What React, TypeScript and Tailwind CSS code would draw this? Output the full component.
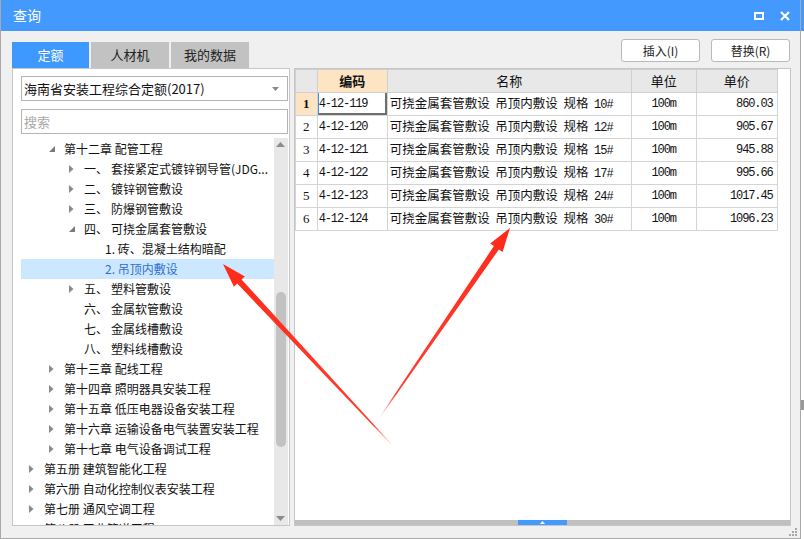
import React from 'react'

type Node = { lvl: 0 | 1 | 2 | 3; arrow?: 'open' | 'closed'; num?: string; text: string; selected?: boolean }

const tree: Node[] = [
  { lvl: 1, arrow: 'open', text: '第十二章 配管工程' },
  { lvl: 2, arrow: 'closed', num: '一、', text: '套接紧定式镀锌钢导管(JDG...' },
  { lvl: 2, arrow: 'closed', num: '二、', text: '镀锌钢管敷设' },
  { lvl: 2, arrow: 'closed', num: '三、', text: '防爆钢管敷设' },
  { lvl: 2, arrow: 'open', num: '四、', text: '可挠金属套管敷设' },
  { lvl: 3, text: '1. 砖、混凝土结构暗配' },
  { lvl: 3, text: '2. 吊顶内敷设', selected: true },
  { lvl: 2, arrow: 'closed', num: '五、', text: '塑料管敷设' },
  { lvl: 2, num: '六、', text: '金属软管敷设' },
  { lvl: 2, num: '七、', text: '金属线槽敷设' },
  { lvl: 2, num: '八、', text: '塑料线槽敷设' },
  { lvl: 1, arrow: 'closed', text: '第十三章 配线工程' },
  { lvl: 1, arrow: 'closed', text: '第十四章 照明器具安装工程' },
  { lvl: 1, arrow: 'closed', text: '第十五章 低压电器设备安装工程' },
  { lvl: 1, arrow: 'closed', text: '第十六章 运输设备电气装置安装工程' },
  { lvl: 1, arrow: 'closed', text: '第十七章 电气设备调试工程' },
  { lvl: 0, arrow: 'closed', text: '第五册 建筑智能化工程' },
  { lvl: 0, arrow: 'closed', text: '第六册 自动化控制仪表安装工程' },
  { lvl: 0, arrow: 'closed', text: '第七册 通风空调工程' },
  { lvl: 0, arrow: 'closed', text: '第八册 工业管道工程' },
]

const rows = [
  ['4-12-119', '10#', '860.03'],
  ['4-12-120', '12#', '905.67'],
  ['4-12-121', '15#', '945.88'],
  ['4-12-122', '17#', '995.66'],
  ['4-12-123', '24#', '1017.45'],
  ['4-12-124', '30#', '1096.23'],
]

const lvlPad = ['pl-[8px]', 'pl-[28px]', 'pl-[48px]', 'pl-[84px]']

const cjk = { fontFamily: '"Noto Sans CJK SC", "Noto Sans", sans-serif' }
const mono = { fontFamily: '"Liberation Mono", "Noto Sans CJK SC", monospace' }

function TreeArrow({ kind }: { kind?: 'open' | 'closed' }) {
  if (kind === 'closed')
    return (
      <svg width="5" height="8" viewBox="0 0 5 8">
        <path d="M0 0 L4.5 4 L0 8 Z" fill="#8a8a8a" />
      </svg>
    )
  if (kind === 'open')
    return (
      <svg width="7" height="7" viewBox="0 0 7 7">
        <path d="M6 0 L6 6 L0 6 Z" fill="#7a7a7a" />
      </svg>
    )
  return null
}

function Arrow({ tip, tail, id }: { tip: [number, number]; tail: [number, number]; id: string }) {
  const dx = tip[0] - tail[0]
  const dy = tip[1] - tail[1]
  const len = Math.hypot(dx, dy)
  const ux = dx / len
  const uy = dy / len
  const nx = -uy
  const ny = ux
  const headLen = 24
  const headW = 15
  const shaftW = 6
  const tailW = 0.8
  const bx = tip[0] - ux * headLen
  const by = tip[1] - uy * headLen
  const p = (x: number, y: number, w: number) => `${x + nx * w / 2},${y + ny * w / 2}`
  const q = (x: number, y: number, w: number) => `${x - nx * w / 2},${y - ny * w / 2}`
  const pts = [
    p(tail[0], tail[1], tailW),
    p(bx, by, shaftW),
    p(bx, by, headW),
    `${tip[0]},${tip[1]}`,
    q(bx, by, headW),
    q(bx, by, shaftW),
    q(tail[0], tail[1], tailW),
  ].join(' ')
  return (
    <>
      <defs>
        <linearGradient id={id} gradientUnits="userSpaceOnUse" x1={tail[0]} y1={tail[1]} x2={tip[0]} y2={tip[1]}>
          <stop offset="0" stopColor="#ff2a1a" stopOpacity="0" />
          <stop offset="0.12" stopColor="#ff2a1a" stopOpacity="0.9" />
          <stop offset="1" stopColor="#ff2a1a" stopOpacity="1" />
        </linearGradient>
      </defs>
      <polygon points={pts} fill={`url(#${id})`} />
    </>
  )
}

export default function App() {
  return (
    <div className="relative w-[804px] h-[539px] flex bg-white overflow-hidden" style={cjk}>
      {/* dialog */}
      <div className="w-[801px] h-[539px] flex flex-col border-x border-b border-[#a9a9a9] bg-[#f0f0f0]">
        {/* title bar */}
        <div className="h-[31px] bg-[#4499ff] flex items-center pl-[12px] pr-[10px] shrink-0">
          <span className="text-white text-[14px]">查询</span>
          <div className="ml-auto flex items-center gap-[16px]">
            <div className="w-[10px] h-[8px] border-2 border-white" />
            <svg width="10" height="10" viewBox="0 0 10 10">
              <path d="M1 1 L9 9 M9 1 L1 9" stroke="white" strokeWidth="2.2" />
            </svg>
          </div>
        </div>

        {/* tabs and buttons */}
        <div className="h-[37px] flex shrink-0 pl-[11px] pr-[10px]">
          <div className="flex items-end gap-[2px]">
            <div className="w-[77px] h-[26px] bg-[#3d98ff] text-white text-[13px] flex items-center justify-center">定额</div>
            <div className="w-[78px] h-[26px] bg-[#c2c2c2] text-[#222] text-[13px] flex items-center justify-center">人材机</div>
            <div className="w-[78px] h-[26px] bg-[#c2c2c2] text-[#222] text-[13px] flex items-center justify-center">我的数据</div>
          </div>
          <div className="ml-auto flex gap-[11px] pt-[8px]">
            <button className="w-[79px] h-[23px] bg-white border border-[#b9b9b9] rounded-[3px] text-[12px] text-[#222]">插入(I)</button>
            <button className="w-[79px] h-[23px] bg-white border border-[#b9b9b9] rounded-[3px] text-[12px] text-[#222]">替换(R)</button>
          </div>
        </div>

        {/* main */}
        <div className="flex gap-[4px] pl-[11px] pr-[9px] h-[458px] shrink-0">
          {/* left panel */}
          <div className="w-[278px] h-[458px] bg-white border border-[#c6c6c6] flex flex-col pl-[8px] pr-[1px]">
            <div className="mt-[7px] h-[25px] border border-[#b4b4b4] flex items-center pl-[2px] pr-[8px] text-[13px] text-[#111]">
              <span>海南省安装工程综合定额(2017)</span>
              <svg className="ml-auto" width="7" height="4" viewBox="0 0 7 4">
                <path d="M0 0 L7 0 L3.5 4 Z" fill="#8a8a8a" />
              </svg>
            </div>
            <div className="mt-[8px] h-[25px] border border-[#b4b4b4] flex items-center pl-[2px] text-[13px] text-[#a8a8a8]">搜索</div>
            <div className="mt-[4px] flex-1 flex overflow-hidden">
              <div className="flex-1 pt-[1px] overflow-hidden">
                {tree.map((n, i) => (
                  <div
                    key={i}
                    className={`h-[20px] flex items-center whitespace-nowrap text-[12px] ${lvlPad[n.lvl]} ${n.selected ? 'bg-[#cce8ff] text-[#2f6fd0]' : 'text-[#111]'}`}
                  >
                    {n.lvl < 3 && (
                      <span className="w-[15px] flex items-center">
                        <TreeArrow kind={n.arrow} />
                      </span>
                    )}
                    {n.num && <span className="w-[27px]">{n.num}</span>}
                    <span>{n.text}</span>
                  </div>
                ))}
              </div>
              {/* vertical scrollbar */}
              <div className="w-[14px] bg-[#e8e8e8] flex flex-col items-center">
                <svg className="mt-[4px]" width="9" height="5" viewBox="0 0 9 5">
                  <path d="M4.5 0 L9 5 L0 5 Z" fill="#8c8c8c" />
                </svg>
                <div className="mt-[145px] w-[10px] h-[155px] rounded-[5px] bg-[#c2c2c2]" />
                <svg className="mt-auto mb-[4px]" width="9" height="5" viewBox="0 0 9 5">
                  <path d="M0 0 L9 0 L4.5 5 Z" fill="#8c8c8c" />
                </svg>
              </div>
            </div>
          </div>

          {/* right panel */}
          <div className="w-[498px] h-[458px] bg-white border border-[#c6c6c6] flex flex-col">
            <div className="flex-1">
              <table className="table-fixed border-collapse text-[12px]" style={{ width: 482 }}>
                <colgroup>
                  <col style={{ width: 22 }} />
                  <col style={{ width: 70 }} />
                  <col style={{ width: 244 }} />
                  <col style={{ width: 65 }} />
                  <col style={{ width: 81 }} />
                </colgroup>
                <thead>
                  <tr className="h-[23px] bg-[#e8e8e8] text-[13px] text-[#111]">
                    <th className="border border-[#cfcfcf] font-normal"></th>
                    <th className="border border-[#cfcfcf] bg-[#fde5c3] font-bold">编码</th>
                    <th className="border border-[#cfcfcf] font-normal">名称</th>
                    <th className="border border-[#cfcfcf] font-normal">单位</th>
                    <th className="border border-[#cfcfcf] font-normal">单价</th>
                  </tr>
                </thead>
                <tbody>
                  {rows.map((r, i) => (
                    <tr key={i} className="h-[23px] text-[#111]">
                      <td
                        className={`border border-[#d4d4d4] text-center ${i === 0 ? 'bg-[#fde5c3] font-bold' : ''}`}
                        style={{ fontFamily: '"Liberation Serif", serif', fontSize: 13 }}
                      >
                        {i + 1}
                      </td>
                      <td
                        className={`border border-[#d4d4d4] px-[1px] tracking-[-1.1px] ${i === 0 ? 'shadow-[inset_1px_0_0_#3a8ee6,inset_-2px_-2px_0_#6e6e6e]' : ''}`}
                        style={mono}
                      >
                        {r[0]}
                      </td>
                      <td className="border border-[#d4d4d4] pl-[2px] whitespace-nowrap text-[12.5px]">
                        可挠金属套管敷设{'\u00a0\u00a0'}吊顶内敷设{'\u00a0\u00a0'}规格{'\u00a0\u00a0'}
                        <span className="tracking-[-1px] text-[12px]" style={mono}>{r[1]}</span>
                      </td>
                      <td className="border border-[#d4d4d4] text-center tracking-[-1.1px]" style={mono}>100m</td>
                      <td className="border border-[#d4d4d4] text-right pr-[4px] tracking-[-1.1px]" style={mono}>{r[2]}</td>
                    </tr>
                  ))}
                </tbody>
              </table>
            </div>
            {/* horizontal scrollbar */}
            <div className="h-[5px] bg-[#c0c0c0] flex justify-center">
              <div className="w-[49px] h-[5px] bg-[#4499ff] flex items-center justify-center">
                <svg width="5" height="3" viewBox="0 0 5 3">
                  <path d="M2.5 0 L5 3 L0 3 Z" fill="white" />
                </svg>
              </div>
            </div>
          </div>
        </div>

        {/* bottom strip with grip */}
        <div className="flex-1 flex items-end justify-end pr-[2px] pb-[1px]">
          <svg width="9" height="9" viewBox="0 0 9 9">
            <rect x="6" y="0" width="2" height="2" fill="#a8a8a8" />
            <rect x="3" y="3" width="2" height="2" fill="#a8a8a8" />
            <rect x="6" y="3" width="2" height="2" fill="#a8a8a8" />
            <rect x="0" y="6" width="2" height="2" fill="#a8a8a8" />
            <rect x="3" y="6" width="2" height="2" fill="#a8a8a8" />
            <rect x="6" y="6" width="2" height="2" fill="#a8a8a8" />
          </svg>
        </div>
      </div>

      {/* background app edge */}
      <div className="w-[3px] h-[539px] bg-white flex flex-col">
        <div className="h-[31px] bg-[#4499ff]" />
        <div className="h-[369px]" />
        <div className="h-[10px] bg-[#9a9a9a]" />
      </div>

      {/* annotation arrows */}
      <svg className="absolute inset-0 pointer-events-none" width="804" height="539">
        <Arrow id="a1" tip={[223, 264]} tail={[393, 446]} />
        <Arrow id="a2" tip={[510, 228]} tail={[380, 417]} />
      </svg>
    </div>
  )
}
